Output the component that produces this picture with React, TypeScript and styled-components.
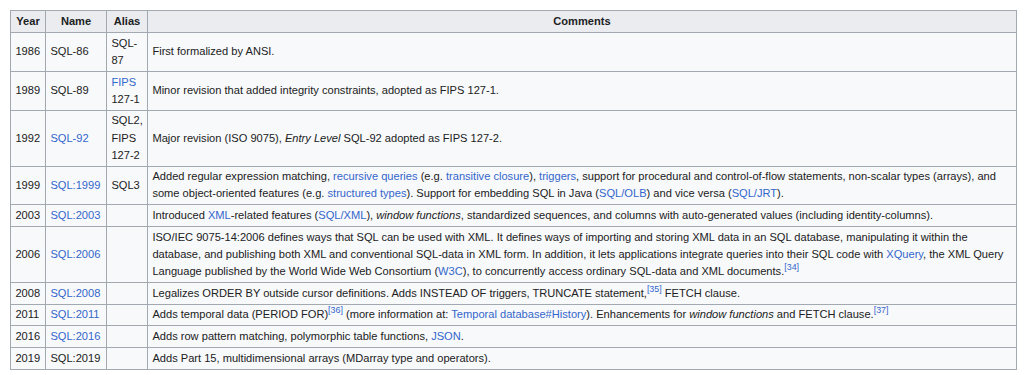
import React from "react";
import styled, { createGlobalStyle } from "styled-components";

const GlobalStyle = createGlobalStyle`
  html, body {
    margin: 0;
    padding: 0;
    background: #ffffff;
  }
`;

const Page = styled.div`
  padding: 10px 7px 6px 10px;
  font-family: "Liberation Sans", Arial, Helvetica, sans-serif;
  font-size: 11.1px;
  line-height: 17.1px;
  color: #202122;
`;

const Table = styled.table`
  width: 1007px;
  table-layout: fixed;
  border-collapse: collapse;
  background: #f8f9fa;
  border: 1px solid #a2a9b1;
`;

const Th = styled.th`
  background: #eaecf0;
  border: 1px solid #a2a9b1;
  padding: 2px 4.4px;
  font-weight: bold;
  text-align: center;
  vertical-align: middle;
`;

const Td = styled.td`
  border: 1px solid #a2a9b1;
  padding: 1.8px 4.4px;
  vertical-align: middle;
  text-align: left;
`;

const Link = styled.a`
  color: #3366cc;
  text-decoration: none;
`;

const Ref = styled.sup`
  font-size: 80%;
  line-height: 1;
  vertical-align: super;
  color: #3366cc;
`;

type Row = {
  year: string;
  name: string;
  nameLink?: boolean;
  alias?: React.ReactNode;
  comment: React.ReactNode;
};

const rows: Row[] = [
  {
    year: "1986",
    name: "SQL-86",
    alias: "SQL-87",
    comment: "First formalized by ANSI.",
  },
  {
    year: "1989",
    name: "SQL-89",
    alias: (
      <>
        <Link>FIPS</Link> 127-1
      </>
    ),
    comment: "Minor revision that added integrity constraints, adopted as FIPS 127-1.",
  },
  {
    year: "1992",
    name: "SQL-92",
    nameLink: true,
    alias: "SQL2, FIPS 127-2",
    comment: (
      <>
        Major revision (ISO 9075), <i>Entry Level</i> SQL-92 adopted as FIPS 127-2.
      </>
    ),
  },
  {
    year: "1999",
    name: "SQL:1999",
    nameLink: true,
    alias: "SQL3",
    comment: (
      <>
        Added regular expression matching, <Link>recursive queries</Link> (e.g.{" "}
        <Link>transitive closure</Link>), <Link>triggers</Link>, support for procedural and
        control-of-flow statements, non-scalar types (arrays), and some object-oriented
        features (e.g. <Link>structured types</Link>). Support for embedding SQL in Java (
        <Link>SQL/OLB</Link>) and vice versa (<Link>SQL/JRT</Link>).
      </>
    ),
  },
  {
    year: "2003",
    name: "SQL:2003",
    nameLink: true,
    comment: (
      <>
        Introduced <Link>XML</Link>-related features (<Link>SQL/XML</Link>),{" "}
        <i>window functions</i>, standardized sequences, and columns with auto-generated
        values (including identity-columns).
      </>
    ),
  },
  {
    year: "2006",
    name: "SQL:2006",
    nameLink: true,
    comment: (
      <>
        ISO/IEC 9075-14:2006 defines ways that SQL can be used with XML. It defines ways of
        importing and storing XML data in an SQL database, manipulating it within the
        database, and publishing both XML and conventional SQL-data in XML form. In addition,
        it lets applications integrate queries into their SQL code with <Link>XQuery</Link>,
        the XML Query Language published by the World Wide Web Consortium (<Link>W3C</Link>),
        to concurrently access ordinary SQL-data and XML documents.<Ref>[34]</Ref>
      </>
    ),
  },
  {
    year: "2008",
    name: "SQL:2008",
    nameLink: true,
    comment: (
      <>
        Legalizes ORDER BY outside cursor definitions. Adds INSTEAD OF triggers, TRUNCATE
        statement,<Ref>[35]</Ref> FETCH clause.
      </>
    ),
  },
  {
    year: "2011",
    name: "SQL:2011",
    nameLink: true,
    comment: (
      <>
        Adds temporal data (PERIOD FOR)<Ref>[36]</Ref> (more information at:{" "}
        <Link>Temporal database#History</Link>). Enhancements for <i>window functions</i>{" "}
        and FETCH clause.<Ref>[37]</Ref>
      </>
    ),
  },
  {
    year: "2016",
    name: "SQL:2016",
    nameLink: true,
    comment: (
      <>
        Adds row pattern matching, polymorphic table functions, <Link>JSON</Link>.
      </>
    ),
  },
  {
    year: "2019",
    name: "SQL:2019",
    comment: "Adds Part 15, multidimensional arrays (MDarray type and operators).",
  },
];

export default function App() {
  return (
    <Page>
      <GlobalStyle />
      <Table>
        <colgroup>
          <col style={{ width: 35 }} />
          <col style={{ width: 61 }} />
          <col style={{ width: 41 }} />
          <col />
        </colgroup>
        <thead>
          <tr>
            <Th>Year</Th>
            <Th>Name</Th>
            <Th>Alias</Th>
            <Th>Comments</Th>
          </tr>
        </thead>
        <tbody>
          {rows.map((row) => (
            <tr key={row.year}>
              <Td>{row.year}</Td>
              <Td>{row.nameLink ? <Link>{row.name}</Link> : row.name}</Td>
              <Td>{row.alias}</Td>
              <Td>{row.comment}</Td>
            </tr>
          ))}
        </tbody>
      </Table>
    </Page>
  );
}
